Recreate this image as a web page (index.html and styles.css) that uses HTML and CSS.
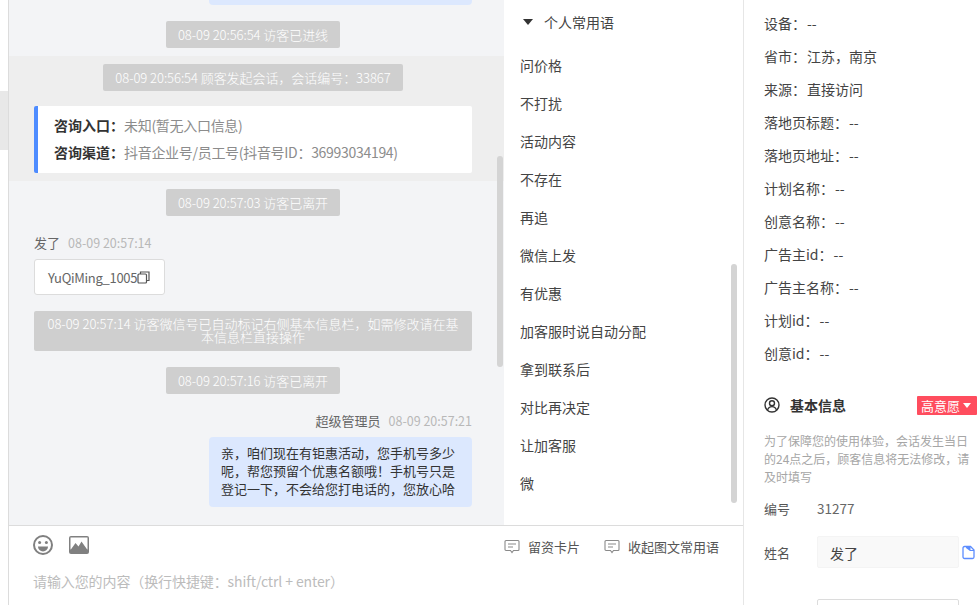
FILE: index.html
```html
<!DOCTYPE html>
<html lang="zh-CN">
<head>
<meta charset="utf-8">
<title>会话</title>
<link rel="stylesheet" href="styles.css">
</head>
<body>
<div class="app">
  <div class="rail"><div class="rail-tab"></div></div>
  <div class="center">
    <div class="upper">
      <section class="chat">
        <div class="msgs">
          <div class="bubble-tail"></div>
          <div class="sys first">08-09 20:56:54 访客已进线</div>
          <div class="band">
            <div class="sys">08-09 20:56:54 顾客发起会话，会话编号：33867</div>
            <div class="entry">
              <p><b>咨询入口：</b><span>未知(暂无入口信息)</span></p>
              <p><b>咨询渠道：</b><span>抖音企业号/员工号(抖音号ID：36993034194)</span></p>
            </div>
          </div>
          <div class="sys after-band">08-09 20:57:03 访客已离开</div>
          <div class="meta"><span class="who">发了</span><span class="time">08-09 20:57:14</span></div>
          <div class="card">YuQiMing_1005<svg class="copy" viewBox="0 0 13 13" width="13" height="13"><path d="M3.5 3V1h8.500v8.500h-2" fill="none" stroke="#555" stroke-width="1.200"/><rect x="1" y="3" width="8.500" height="9" rx="1" fill="none" stroke="#555" stroke-width="1.200"/></svg></div>
          <div class="sys wide">08-09 20:57:14 访客微信号已自动标记右侧基本信息栏，如需修改请在基本信息栏直接操作</div>
          <div class="sys gap">08-09 20:57:16 访客已离开</div>
          <div class="meta right"><span class="who">超级管理员</span><span class="time">08-09 20:57:21</span></div>
          <div class="bubble">亲，咱们现在有钜惠活动，您手机号多少呢，帮您预留个优惠名额哦！手机号只是登记一下，不会给您打电话的，您放心哈</div>
        </div>
        <div class="scroll chat-scroll"></div>
      </section>
      <section class="phrases">
        <div class="ph-head"><span class="caret"></span>个人常用语</div>
        <ul class="ph-list">
          <li>问价格</li><li>不打扰</li><li>活动内容</li><li>不存在</li><li>再追</li><li>微信上发</li>
          <li>有优惠</li><li>加客服时说自动分配</li><li>拿到联系后</li><li>对比再决定</li><li>让加客服</li><li>微</li>
        </ul>
        <div class="scroll ph-scroll"></div>
      </section>
    </div>
    <div class="composer">
      <div class="tools">
        <div class="tools-left">
          <svg viewBox="0 0 22 22" width="22" height="22"><circle cx="11" cy="11" r="9" fill="none" stroke="#808080" stroke-width="2"/><circle cx="7.600" cy="8.500" r="1.500" fill="#808080"/><circle cx="14.400" cy="8.500" r="1.500" fill="#808080"/><path d="M6 12.500h10a5 5 0 0 1-10 0z" fill="#808080"/></svg>
          <svg viewBox="0 0 20 20" width="20" height="20"><rect x="0" y="1" width="20" height="18" rx="2" fill="#808080"/><rect x="1.500" y="2.500" width="17" height="12" fill="#fff"/><path d="M1.500 15l5-7 3 3.500 3-5 6 8.500v2h-17z" fill="#808080"/></svg>
        </div>
        <div class="tools-right">
          <span class="tool"><svg viewBox="0 0 16 15" width="16" height="15"><path d="M2 1.500h12a1 1 0 0 1 1 1v8a1 1 0 0 1-1 1H9.500L8 13.500 6.500 11.500H2a1 1 0 0 1-1-1v-8a1 1 0 0 1 1-1z" fill="none" stroke="#8a8a8a" stroke-width="1.100"/><path d="M4 5h8M4 8h5" stroke="#8a8a8a" stroke-width="1.100"/></svg>留资卡片</span>
          <span class="tool"><svg viewBox="0 0 16 15" width="16" height="15"><path d="M2 1.500h12a1 1 0 0 1 1 1v8a1 1 0 0 1-1 1H9.500L8 13.500 6.500 11.500H2a1 1 0 0 1-1-1v-8a1 1 0 0 1 1-1z" fill="none" stroke="#8a8a8a" stroke-width="1.100"/><path d="M4 5h8M4 8h5" stroke="#8a8a8a" stroke-width="1.100"/></svg>收起图文常用语</span>
        </div>
      </div>
      <div class="placeholder">请输入您的内容（换行快捷键：shift/ctrl + enter）</div>
    </div>
  </div>
  <aside class="info">
    <ul class="facts">
      <li>设备：<span>--</span></li>
      <li>省市：<span>江苏，南京</span></li>
      <li>来源：<span>直接访问</span></li>
      <li>落地页标题：<span>--</span></li>
      <li>落地页地址：<span>--</span></li>
      <li>计划名称：<span>--</span></li>
      <li>创意名称：<span>--</span></li>
      <li>广告主id：<span>--</span></li>
      <li>广告主名称：<span>--</span></li>
      <li>计划id：<span>--</span></li>
      <li>创意id：<span>--</span></li>
    </ul>
    <div class="basic-head">
      <svg viewBox="0 0 16 16" width="16" height="16"><circle cx="8" cy="8" r="7" fill="none" stroke="#333" stroke-width="1.400"/><circle cx="8" cy="6.300" r="2.500" fill="none" stroke="#333" stroke-width="1.400"/><path d="M3.500 13c.8-2.400 2.500-3.400 4.500-3.400s3.700 1 4.500 3.400" fill="none" stroke="#333" stroke-width="1.400"/></svg>
      <b>基本信息</b>
      <span class="tag">高意愿<i></i></span>
    </div>
    <p class="hint">为了保障您的使用体验，会话发生当日的24点之后，顾客信息将无法修改，请及时填写</p>
    <div class="row num"><label>编号</label><span>31277</span></div>
    <div class="row name">
      <label>姓名</label>
      <div class="field">发了</div>
      <svg class="doc" viewBox="0 0 13 15" width="13" height="15"><path d="M2.500 1.500h6l3.500 3.500v7a1.500 1.500 0 0 1-1.500 1.500h-8A1.500 1.500 0 0 1 1 12V3a1.500 1.500 0 0 1 1.500-1.500z" fill="none" stroke="#5c8dff" stroke-width="1.300"/><path d="M4 1.500h4.500V5H12v1H8L4 3z" fill="#5c8dff"/></svg>
    </div>
    <div class="field-next"></div>
  </aside>
</div>
</body>
</html>
```
FILE: styles.css
```css
* { box-sizing: border-box; }
html, body { margin: 0; padding: 0; height: 100%; overflow: hidden; background: #fff; }
body { font-family: "Noto Sans CJK SC", "Noto Sans", sans-serif; color: #333; font-size: 14px; }
ul { list-style: none; margin: 0; padding: 0; }
p { margin: 0; }

.app { display: flex; width: 979px; height: 605px; overflow: hidden; }

.rail { width: 9px; flex: none; border-right: 1px solid #dcdcdc; padding-top: 91px; }
.rail-tab { height: 59px; background: #e8e8e8; }

.center { width: 735px; flex: none; display: flex; flex-direction: column; border-right: 1px solid #e6e6e6; }
.upper { display: flex; height: 525px; flex: none; }

.chat { position: relative; width: 495px; flex: none; background: #f3f4f6; overflow: hidden; }
.msgs { display: flex; flex-direction: column; padding: 0 32px 0 25px; }
.bubble-tail { align-self: flex-end; width: 263px; height: 5px; background: #dce8fe; border-radius: 0 0 4px 4px; }

.sys { align-self: center; padding: 0 12px; height: 27px; line-height: 27px; background: #cfcfcf; color: #fff; font-size: 13px; font-weight: 300; letter-spacing: -0.05px; border-radius: 2px; text-align: center; white-space: nowrap; }
.sys.first { margin-top: 16px; }
.band { display: flex; flex-direction: column; align-items: center; height: 125px; margin: 8px -32px 0 -25px; padding: 8px 32px 0 25px; background: #eeeeee; }
.sys.after-band { margin-top: 8px; }
.entry { align-self: stretch; height: 67px; margin-top: 15px; padding: 6px 0 0 16px; background: #fff; border-left: 4px solid #4e8cff; border-radius: 2px; font-size: 14px; line-height: 27px; white-space: nowrap; }
.entry b { font-weight: 700; color: #333; }
.entry span { color: #8c8c8c; letter-spacing: -0.3px; }

.meta { margin-top: 17px; height: 20px; line-height: 20px; font-size: 13px; color: #666; display: flex; gap: 8px; }
.meta.right { justify-content: flex-end; }
.time { color: #b8b8b8; font-size: 12.500px; }
.card { align-self: flex-start; display: flex; align-items: center; margin-top: 6px; width: 131px; height: 36px; padding-left: 13px; background: #fff; border: 1px solid #dcdcdc; border-radius: 3px; color: #666; font-size: 13px; letter-spacing: -0.3px; }
.copy { flex: none; }

.sys.wide { align-self: stretch; margin-top: 16px; height: 40px; padding: 6px 12px 0; line-height: 13px; letter-spacing: 0; white-space: normal; }
.sys.gap { margin-top: 16px; }
.bubble { align-self: flex-end; width: 263px; height: 70px; margin-top: 6px; padding: 7px 12px; background: #dce8fe; border-radius: 4px; font-size: 13px; line-height: 18px; color: #333; }

.scroll { position: absolute; width: 6px; background: #d4d4d4; border-radius: 3px; }
.chat-scroll { left: 488px; top: 156px; height: 211px; }

.phrases { position: relative; flex: 1; background: #fff; }
.ph-head { display: flex; align-items: center; height: 24px; margin: 10px 0 0 19px; font-size: 14px; color: #444; }
.caret { width: 0; height: 0; border-left: 5px solid transparent; border-right: 5px solid transparent; border-top: 6px solid #333; margin-right: 11px; }
.ph-list { margin: 12px 0 0 16px; }
.ph-list li { height: 38px; line-height: 38px; font-size: 14px; color: #444; }
.ph-scroll { left: 227px; top: 264px; height: 239px; }

.composer { height: 80px; flex: none; border-top: 2px solid #dcdcdc; margin-top: -1px; background: #fff; }
.tools { display: flex; justify-content: space-between; align-items: center; height: 36px; padding: 0 24px 0 23px; }
.tools-left { display: flex; align-items: center; gap: 15px; margin-top: 2px; }
.tools-right { display: flex; gap: 24px; margin-top: 5px; }
.tool { display: flex; align-items: center; gap: 8px; font-size: 13px; color: #555; }
.placeholder { margin: 9px 0 0 24px; font-size: 14px; letter-spacing: -0.1px; color: #bcbcbc; }

.info { flex: 1; padding: 0 0 0 20px; overflow: hidden; }
.facts { margin-top: 7px; }
.facts li { height: 33px; line-height: 33px; font-size: 14px; color: #444; white-space: nowrap; }
.facts span { margin-left: 1px; }

.basic-head { display: flex; align-items: center; height: 20px; margin-top: 25px; padding-right: 2px; }
.basic-head svg { flex: none; }
.basic-head b { margin-left: 10px; font-size: 14px; font-weight: 700; color: #333; }
.tag { margin-left: auto; display: flex; align-items: center; width: 60px; height: 19px; padding-left: 4px; background: #ff4d5e; color: #fff; font-size: 13px; border-radius: 1px; }
.tag i { width: 0; height: 0; margin-left: 3px; border-left: 4px solid transparent; border-right: 4px solid transparent; border-top: 5px solid #fff; }
.hint { margin: 17px 8px 0 0; font-size: 12px; line-height: 18px; color: #a6a6a6; }
.row { display: flex; align-items: center; }
.row label { width: 53px; flex: none; font-size: 13px; color: #555; }
.num { margin-top: 10px; height: 24px; font-size: 13.500px; color: #666; }
.name { margin-top: 16px; }
.field { width: 142px; height: 32px; line-height: 32px; padding-left: 12px; background: #f9f9f9; border: 1px solid #f4f4f4; border-radius: 2px; font-size: 14px; color: #444; }
.doc { margin-left: 3px; flex: none; }
.field-next { width: 142px; height: 40px; margin: 31px 0 0 53px; border: 1px solid #dcdcdc; border-radius: 2px; }
```
